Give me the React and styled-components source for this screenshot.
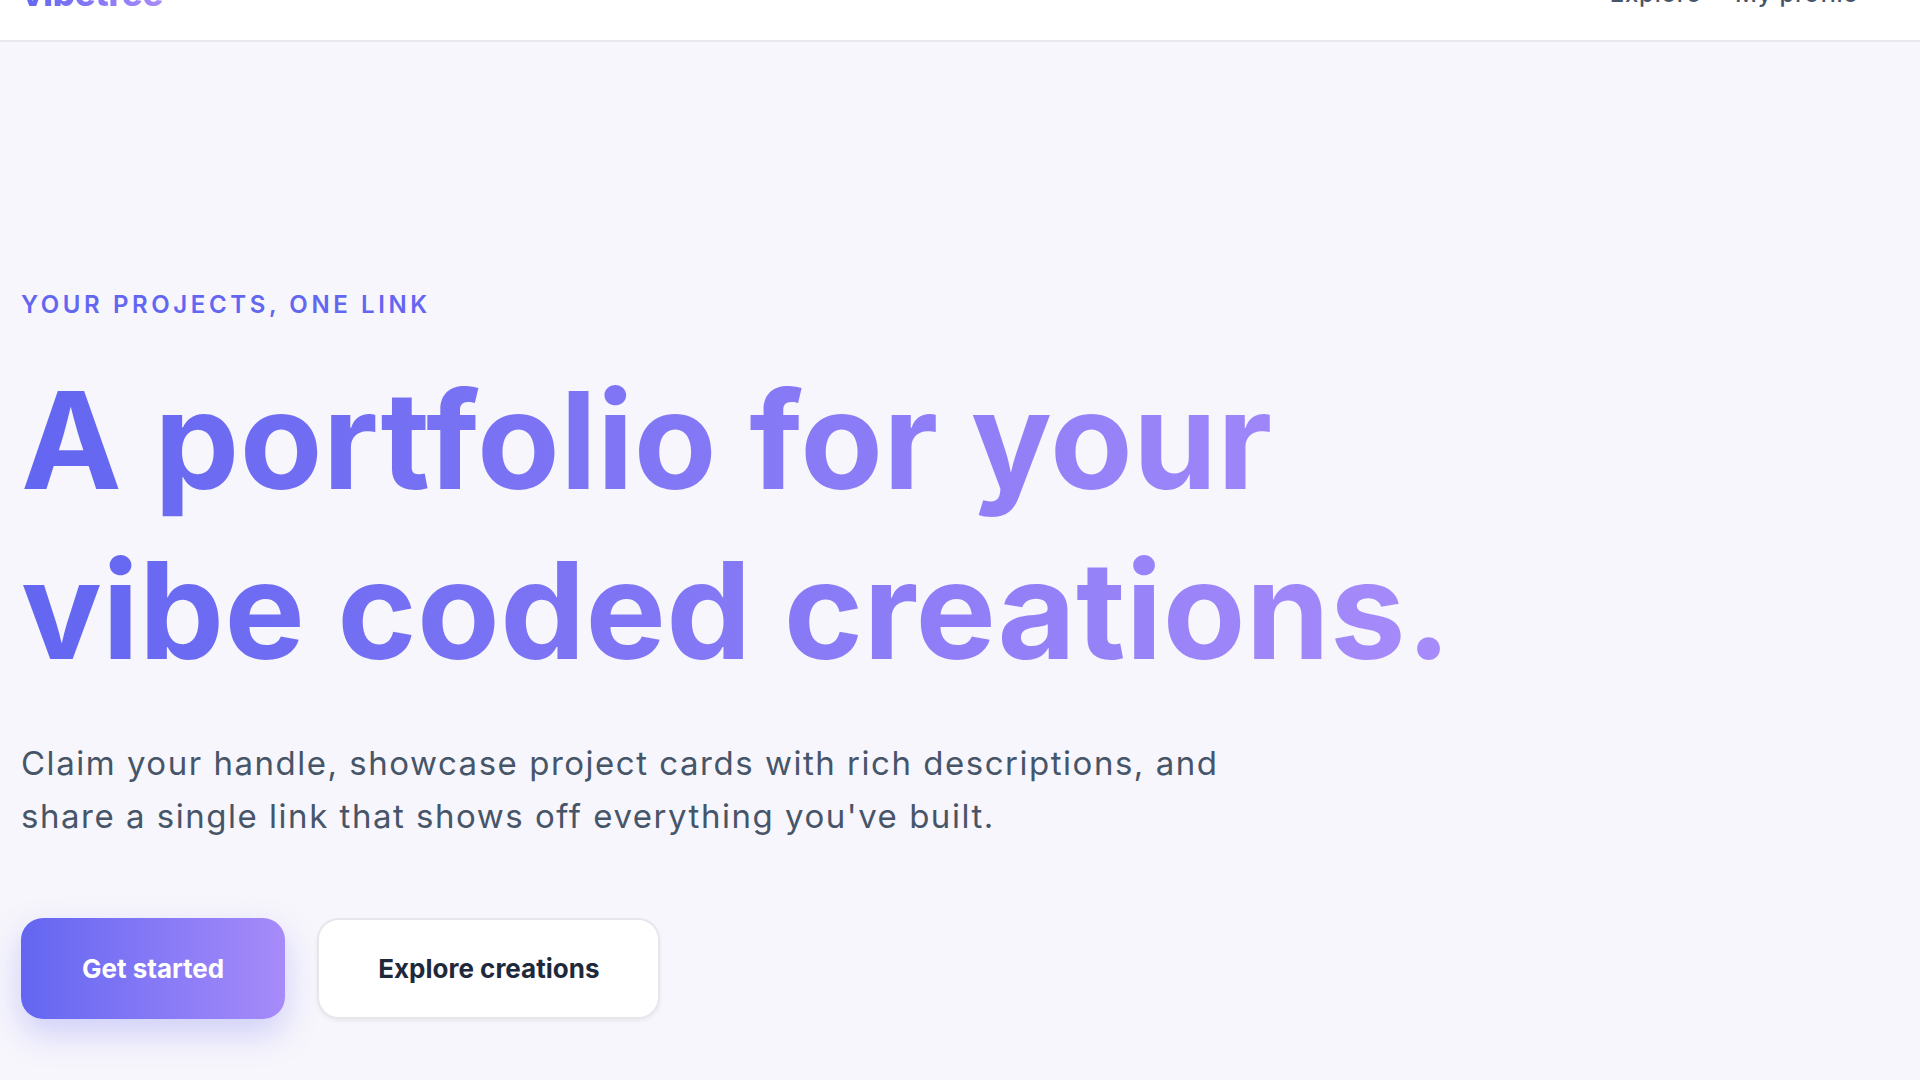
import React from "react";
import styled, { createGlobalStyle } from "styled-components";

const GlobalStyle = createGlobalStyle`
  html {
    overflow: hidden;
    background: #f7f6fc;
  }
  body {
    margin: 0;
    padding: 0;
    background: #f7f6fc;
    font-family: Inter, "Noto Sans", "Liberation Sans", sans-serif;
  }
  * { box-sizing: border-box; }
`;

const Page = styled.div`
  min-height: 1140px;
  background: #f7f6fc;
`;

const Header = styled.header`
  height: 96px;
  margin-top: -54px;
  padding: 0 62px 0 22px;
  display: flex;
  align-items: center;
  justify-content: space-between;
  background: #ffffff;
  border-bottom: 2px solid #e8e8f0;
`;

const Logo = styled.a`
  font-size: 35px;
  font-weight: 800;
  letter-spacing: -0.01em;
  background: linear-gradient(90deg, #6366f1, #a78bfa);
  -webkit-background-clip: text;
  background-clip: text;
  color: transparent;
  text-decoration: none;
`;

const Nav = styled.nav`
  display: flex;
  gap: 34px;
`;

const NavLink = styled.a`
  font-size: 24px;
  font-weight: 500;
  letter-spacing: 0.03em;
  color: #475569;
  text-decoration: none;
`;

const Hero = styled.section`
  padding: 248px 21px 0;
  display: flex;
  flex-direction: column;
  align-items: flex-start;
`;

const Eyebrow = styled.p`
  margin: 0;
  font-size: 24px;
  font-weight: 600;
  letter-spacing: 0.15em;
  color: #6366f1;
  text-transform: uppercase;
`;

const Title = styled.h1`
  margin: 36px 0 0;
  font-size: 135px;
  line-height: 170px;
  font-weight: 700;
  letter-spacing: 0.002em;
  background: linear-gradient(90deg, #6366f1 0%, #a78bfa 100%);
  -webkit-background-clip: text;
  background-clip: text;
  color: transparent;
`;

const Lead = styled.p`
  margin: 42px 0 0;
  max-width: 1260px;
  font-size: 33px;
  line-height: 53px;
  font-weight: 400;
  letter-spacing: 0.046em;
  color: #475569;
`;

const Actions = styled.div`
  margin-top: 75px;
  display: flex;
  gap: 32px;
`;

const Button = styled.a`
  height: 101px;
  padding: 0 ${p => (p.primary ? "61px" : "59px")};
  display: inline-flex;
  align-items: center;
  justify-content: center;
  border-radius: 22px;
  font-size: 26px;
  font-weight: 700;
  text-decoration: none;
  color: ${p => (p.primary ? "#ffffff" : "#1e293b")};
  background: ${p =>
    p.primary ? "linear-gradient(90deg, #6366f1, #a78bfa)" : "#ffffff"};
  border: ${p => (p.primary ? "none" : "2px solid #e5e7eb")};
  box-shadow: ${p =>
    p.primary
      ? "0 14px 34px rgba(99, 102, 241, 0.28)"
      : "0 2px 4px rgba(15, 23, 42, 0.06)"};
`;

export default function App() {
  return (
    <Page>
      <GlobalStyle />
      <Header>
        <Logo href="#">vibetree</Logo>
        <Nav>
          <NavLink href="#">Explore</NavLink>
          <NavLink href="#">My profile</NavLink>
        </Nav>
      </Header>
      <Hero>
        <Eyebrow>Your projects, one link</Eyebrow>
        <Title>
          A portfolio for your
          <br />
          vibe coded creations.
        </Title>
        <Lead>
          Claim your handle, showcase project cards with rich descriptions, and
          share a single link that shows off everything you've built.
        </Lead>
        <Actions>
          <Button primary href="#">Get started</Button>
          <Button href="#">Explore creations</Button>
        </Actions>
      </Hero>
    </Page>
  );
}
